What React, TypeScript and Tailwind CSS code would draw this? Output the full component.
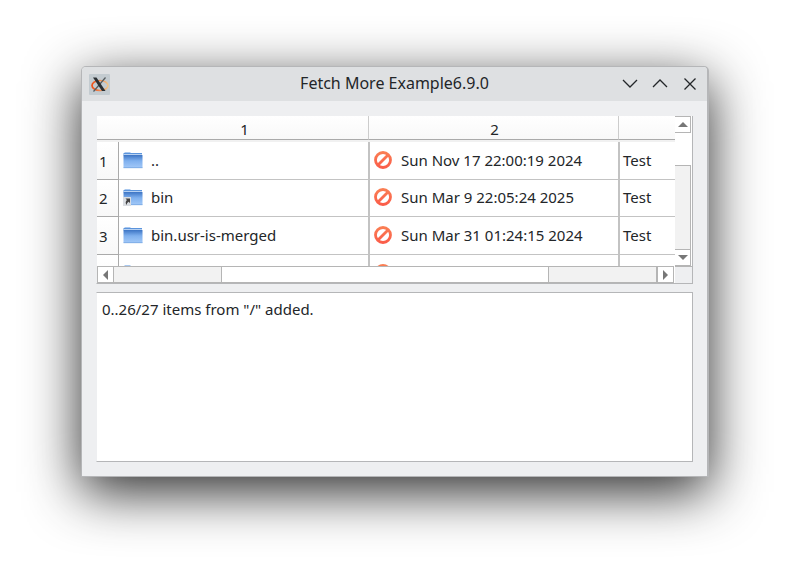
import React, { useId } from 'react';

const rows = [
  { n: '1', name: '..', link: false, date: 'Sun Nov 17 22:00:19 2024', type: 'Test', h: 'h-[38px]' },
  { n: '2', name: 'bin', link: true, date: 'Sun Mar 9 22:05:24 2025', type: 'Test', h: 'h-[37px]' },
  { n: '3', name: 'bin.usr-is-merged', link: false, date: 'Sun Mar 31 01:24:15 2024', type: 'Test', h: 'h-[38px]' },
  { n: '', name: '', link: false, date: '', type: '', h: 'h-[38px]' },
];

function Folder({ link }: { link: boolean }) {
  const id = useId();
  return (
    <svg width="20" height="20" viewBox="0 0 20 20" className="shrink-0" aria-hidden="true">
      <defs>
        <linearGradient id={id} x1="0" y1="0" x2="0" y2="1">
          <stop offset="0" stopColor="#3c74c4" />
          <stop offset="0.45" stopColor="#7fb0ee" />
          <stop offset="1" stopColor="#a3c9f8" />
        </linearGradient>
      </defs>
      <path d="M1.500 2h6v2h-6z" fill="#a9c8ef" />
      <path d="M0.500 3h18.500v2.500H0.500z" fill="#5b94dc" />
      <path d="M1 4.500h18" stroke="#cfe1f7" strokeWidth="0.800" />
      <rect x="0.500" y="5" width="19" height="13" rx="0.500" fill={`url(#${id})`} />
      <path d="M0.500 17.700h19" stroke="#6f9fdc" strokeWidth="0.700" />
      {link && (
        <g>
          <rect x="0" y="10" width="8" height="9" fill="#d9dde2" />
          <path d="M2.500 11.500h4.500v4.500L5.500 14.800Q3.500 16 3.800 18Q1.500 15.500 3.900 13z" fill="#444" />
        </g>
      )}
    </svg>
  );
}

function Forbidden() {
  const id = useId();
  return (
    <svg width="18" height="18" viewBox="0 0 18 18" className="shrink-0" aria-hidden="true">
      <defs>
        <linearGradient id={id} gradientUnits="userSpaceOnUse" x1="0" y1="0" x2="0" y2="18">
          <stop offset="0" stopColor="#fa8054" />
          <stop offset="1" stopColor="#fb5a48" />
        </linearGradient>
      </defs>
      <g fill="none" stroke={`url(#${id})`} strokeWidth="2.800">
        <circle cx="9" cy="9" r="7.500" />
        <path d="M14 4 4 14" />
      </g>
    </svg>
  );
}

function XLogo() {
  return (
    <svg width="21" height="21" viewBox="0 0 21 21" aria-hidden="true">
      <defs>
        <linearGradient id="ring" x1="0" x2="1">
          <stop offset="0" stopColor="#f04e16" />
          <stop offset="1" stopColor="#eec58c" />
        </linearGradient>
      </defs>
      <rect width="21" height="21" rx="1" fill="#c3cbd0" />
      <ellipse cx="11" cy="11.500" rx="8" ry="5" fill="none" stroke="url(#ring)" strokeWidth="1.700" />
      <path d="M16.500 3.500 4.500 17.500" stroke="#555b5e" strokeWidth="1.200" />
      <path d="M4 3.500h3.500l9 13.500h-3.500z" fill="#2b3033" />
    </svg>
  );
}

const arrows = {
  up: 'M3 10 8 5l5 5z',
  down: 'M3 5l5 5 5-5z',
  left: 'M10 3 5 8l5 5z',
  right: 'M5 3l5 5-5 5z',
};

function ScrollButton({ dir, className }: { dir: keyof typeof arrows; className: string }) {
  return (
    <button type="button" aria-label={`Scroll ${dir}`} className={`flex shrink-0 items-center justify-center bg-white border-[#b5b5b5] ${className}`}>
      <svg width="16" height="16" viewBox="0 0 16 16" className="shrink-0" aria-hidden="true">
        <path d={arrows[dir]} fill="#777" />
      </svg>
    </button>
  );
}

const titleButtons = [
  { label: 'Minimize', d: 'M3 6l7 7 7-7' },
  { label: 'Maximize', d: 'M3 13l7-7 7 7' },
  { label: 'Close', d: 'M4.500 4.500l11 11M15.500 4.500l-11 11' },
];

export default function App() {
  return (
    <div className="min-h-screen overflow-hidden bg-white pt-[66px] pr-20 pb-24 pl-[81px] font-['Noto_Sans',sans-serif] text-[15px] leading-5 text-[#232629]">
      <main className="rounded-t-[5px] border border-r-2 border-[#b5b6b8] bg-[#eeeff1] shadow-[0_15px_54px_0_rgba(0,0,0,0.84)]">
        <header className="grid h-[34px] grid-cols-[1fr_auto_1fr] items-center rounded-t-[4px] bg-[#dee0e2] px-[7px]">
          <XLogo />
          <h1 className="pb-0.5 text-base">Fetch More Example6.9.0</h1>
          <div className="flex justify-end gap-[10px]">
            {titleButtons.map((b) => (
              <button key={b.label} type="button" aria-label={b.label}>
                <svg width="20" height="20" viewBox="0 0 20 20" fill="none" stroke="#232629" strokeWidth="1.300" aria-hidden="true">
                  <path d={b.d} />
                </svg>
              </button>
            ))}
          </div>
        </header>
        <div className="flex flex-col gap-2 p-[14px] pt-[15px]">
          <section className="flex flex-col border border-t-0 border-l-[#eeeff1] border-[#b5b6b8] bg-white">
            <div className="flex h-[150px]">
              <div className="min-w-0 flex-1 overflow-hidden">
                <table className="w-[772px] table-fixed border-separate border-spacing-0">
                  <colgroup>
                    <col className="w-[22px]" />
                    <col className="w-[250px]" />
                    <col className="w-[250px]" />
                    <col className="w-[250px]" />
                  </colgroup>
                  <thead>
                    <tr className="h-[24px] bg-linear-to-b from-white to-[#f8f8f8]">
                      <th className="border-b border-[#aaa] p-0" />
                      {['1', '2', ''].map((n, i) => (
                        <th key={i} scope="col" className="border-r border-b border-r-[#ccc] border-b-[#aaa] p-0 pt-[3px] pl-0.5 text-center font-normal">{n}</th>
                      ))}
                    </tr>
                    <tr className="h-0.5 bg-[#f1f1f1]">
                      <td colSpan={4} className="p-0" />
                    </tr>
                  </thead>
                  <tbody>
                    {rows.map((r, i) => (
                      <tr key={i} className={r.h}>
                        <th scope="row" className="border-r border-b border-[#aaa] bg-linear-to-b from-white to-[#f8f8f8] p-0 pl-0.5 text-left font-normal">{r.n}</th>
                        <td className="border-r border-b border-[#c3c3c3] p-0 pb-0.5 pl-1">
                          <div className="flex items-center gap-2"><Folder link={r.link} />{r.name}</div>
                        </td>
                        <td className="border-x border-b border-[#c3c3c3] p-0 pb-0.5 pl-1">
                          <div className="flex items-center gap-[9px]"><Forbidden />{r.date}</div>
                        </td>
                        <td className="border-l border-b border-[#c3c3c3] p-0 pb-0.5 pl-[3px]">{r.type}</td>
                      </tr>
                    ))}
                  </tbody>
                </table>
              </div>
              <div className="flex w-[17px] flex-col pr-px">
                <ScrollButton dir="up" className="h-[17px] w-4 border-y border-r" />
                <div className="h-8" />
                <div className="flex-1 border-t border-r border-[#b5b5b5] bg-[#f2f2f2]" />
                <ScrollButton dir="down" className="h-[17px] w-4 border-y border-r" />
              </div>
            </div>
            <div className="flex h-[17px]">
              <ScrollButton dir="left" className="w-[17px] border" />
              <div className="w-[108px] border-y border-r border-[#b5b5b5] bg-[#f2f2f2]" />
              <div className="flex-1 border-y border-[#b5b5b5]" />
              <div className="w-[109px] border border-[#b5b5b5] bg-[#f2f2f2]" />
              <ScrollButton dir="right" className="w-[17px] border" />
              <div className="ml-px w-[17px] border-t border-[#b5b5b5] bg-[#eeeff1]" />
            </div>
          </section>
          <textarea readOnly aria-label="Log" defaultValue={'0..26/27 items from "/" added.'} className="block h-[170px] w-full resize-none border border-[#b5b6b8] border-l-[#eeeff1] bg-white px-[5px] py-1.5 outline-none" />
        </div>
      </main>
    </div>
  );
}
